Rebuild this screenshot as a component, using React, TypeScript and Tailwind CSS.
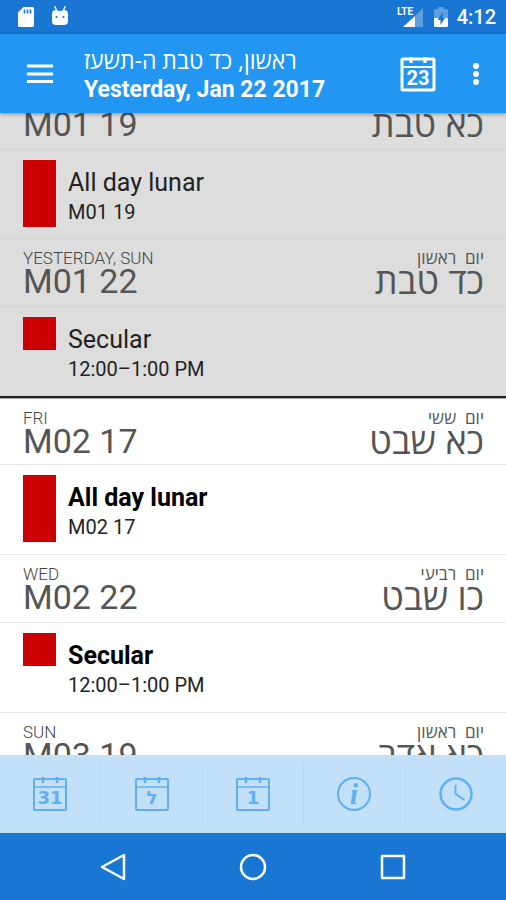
import type { ReactNode } from 'react';

type AgendaEvent = { title: string; detail: string; allDay?: boolean };

type Day = {
  weekday: string;
  date: string;
  hebrewWeekday: string;
  hebrewDate: string;
  past?: boolean;
  events: AgendaEvent[];
};

const pastDays: Day[] = [
  {
    weekday: 'THU',
    date: 'M01 19',
    hebrewWeekday: 'יום  חמישי',
    hebrewDate: 'כא טבת',
    past: true,
    events: [{ title: 'All day lunar', detail: 'M01 19', allDay: true }],
  },
  {
    weekday: 'YESTERDAY, SUN',
    date: 'M01 22',
    hebrewWeekday: 'יום  ראשון',
    hebrewDate: 'כד טבת',
    past: true,
    events: [{ title: 'Secular', detail: '12:00–1:00 PM' }],
  },
];

const upcomingDays: Day[] = [
  {
    weekday: 'FRI',
    date: 'M02 17',
    hebrewWeekday: 'יום  ששי',
    hebrewDate: 'כא שבט',
    events: [{ title: 'All day lunar', detail: 'M02 17', allDay: true }],
  },
  {
    weekday: 'WED',
    date: 'M02 22',
    hebrewWeekday: 'יום  רביעי',
    hebrewDate: 'כו שבט',
    events: [{ title: 'Secular', detail: '12:00–1:00 PM' }],
  },
  {
    weekday: 'SUN',
    date: 'M03 19',
    hebrewWeekday: 'יום  ראשון',
    hebrewDate: 'כא אדר',
    events: [],
  },
];

function CalendarIcon({ label, bold }: { label: string; bold?: boolean }) {
  return (
    <svg width="36" height="36" viewBox="0 0 36 36" fill="none" stroke="currentColor" aria-hidden="true">
      <rect x="2" y="3" width="32" height="31" rx="1" strokeWidth={bold ? 3 : 2} />
      <path d="M2 11h32" strokeWidth={bold ? 2 : 1.5} />
      <path d="M11 1v6M25 1v6" strokeWidth={bold ? 3 : 2.5} />
      <text
        x="18"
        y={bold ? 29 : 28}
        textAnchor="middle"
        fill="currentColor"
        stroke="none"
        className={bold ? 'text-[20px] font-bold font-[Roboto,sans-serif]' : "text-[18px] font-bold font-['DejaVu_Sans',sans-serif]"}
      >
        {label}
      </text>
    </svg>
  );
}

function InfoIcon() {
  return (
    <svg width="36" height="36" viewBox="0 0 36 36" fill="none" stroke="currentColor" aria-hidden="true">
      <circle cx="18" cy="18" r="16" strokeWidth="2" />
      <text
        x="18"
        y="28"
        textAnchor="middle"
        fill="currentColor"
        stroke="none"
        className="text-[30px] font-bold italic font-['Liberation_Serif',serif]"
      >
        i
      </text>
    </svg>
  );
}

function ClockIcon() {
  return (
    <svg width="36" height="36" viewBox="0 0 36 36" fill="none" stroke="currentColor" aria-hidden="true">
      <circle cx="18" cy="18" r="15.500" strokeWidth="2.500" />
      <path d="M17.500 9v9l9 6" strokeWidth="2" />
    </svg>
  );
}

function StatusBar() {
  return (
    <div className="flex h-[34px] shrink-0 items-center bg-[#1976d2] pl-[17px] pr-2.5 text-white">
      <svg width="18" height="22" viewBox="0 0 18 22" aria-hidden="true">
        <path d="M6.500 1H15.500Q17 1 17 2.500V19.500Q17 21 15.500 21H2.500Q1 21 1 19.500V6.500Z" fill="#fff" />
        <path d="M7.500 3.500v4M10.500 3.500v4M13.500 3.500v4" stroke="#1976d2" strokeWidth="1.600" />
      </svg>
      <svg width="18" height="22" viewBox="0 0 18 22" className="ml-4" aria-hidden="true">
        <path d="M3.500 0l2.500 5M14.500 0L12 5" stroke="#fff" strokeWidth="1.300" />
        <path d="M1 8Q1 4 5 4q4 2 8 0q4 0 4 4v7q0 4-4 4H5q-4 0-4-4Z" fill="#fff" />
        <circle cx="5.500" cy="11" r="1.100" fill="#1976d2" />
        <circle cx="12.500" cy="11" r="1.100" fill="#1976d2" />
      </svg>
      <svg width="28" height="22" viewBox="0 0 28 22" className="ml-auto" aria-hidden="true">
        <path d="M26 2v19H17V11Z" fill="#5e9fe0" />
        <path d="M18 10v11H6Z" fill="#fff" />
        <text x="0" y="9" fill="#fff" className="text-[10px] font-bold font-[Roboto,sans-serif]">
          LTE
        </text>
      </svg>
      <svg width="16" height="22" viewBox="0 0 16 22" className="ml-2" aria-hidden="true">
        <path d="M5 1h6v2h2.500Q15 3 15 4.500V12H1V4.500Q1 3 2.500 3H5Z" fill="#5e9fe0" />
        <path d="M1 12h14v7.500Q15 21 13.500 21h-11Q1 21 1 19.500Z" fill="#fff" />
        <path d="M10 6L4.500 14h3v5l4.500-7H9.500Z" fill="#1976d2" />
      </svg>
      <span className="ml-2 text-[20px] leading-6 font-medium">4:12</span>
    </div>
  );
}

function AppBar() {
  return (
    <header className="relative z-10 flex h-[79px] shrink-0 items-center bg-[#2196f3] pl-[26px] pr-[18px] text-white shadow-[0_1px_4px_rgba(0,0,0,0.4)]">
      <button type="button" aria-label="Open menu">
        <svg width="28" height="22" viewBox="0 0 28 22" stroke="#fff" strokeWidth="3" aria-hidden="true">
          <path d="M1 3h26M1 11h26M1 18.500h26" />
        </svg>
      </button>
      <div className="ml-[30px] flex flex-1 flex-col items-start pt-1">
        <p dir="rtl" className="text-[23px] leading-7 whitespace-nowrap font-['Open_Sans','Noto_Sans',sans-serif]">
          ראשון, כד טבת ה-תשעז
        </p>
        <h1 className="text-[23px] leading-8 font-bold whitespace-nowrap">Yesterday, Jan 22 2017</h1>
      </div>
      <button type="button" aria-label="Go to today">
        <CalendarIcon label="23" bold />
      </button>
      <button type="button" aria-label="More options" className="ml-7">
        <svg width="24" height="28" viewBox="0 0 24 28" fill="#fff" aria-hidden="true">
          <circle cx="12" cy="6" r="3" />
          <circle cx="12" cy="14" r="3" />
          <circle cx="12" cy="22" r="3" />
        </svg>
      </button>
    </header>
  );
}

function DaySection({ day, first }: { day: Day; first?: boolean }) {
  const line = day.past ? 'border-[#d2d2d2]' : 'border-[#e6e6e6]';

  return (
    <section className={day.past ? 'bg-[#dddddd]' : 'bg-white'}>
      <div className={`flex justify-between border-b pt-[11px] pl-[23px] pr-[22px] text-[#555555] ${line} ${first ? 'pb-2' : 'pb-2.5'}`}>
        <div>
          <p className="text-[17px] leading-4 font-light text-[#444444]">{day.weekday}</p>
          <h2 className="text-[34px] leading-[30px]">{day.date}</h2>
        </div>
        <div dir="rtl" className="font-['Open_Sans','Noto_Sans',sans-serif]">
          <p className="text-[17px] leading-4 whitespace-pre">{day.hebrewWeekday}</p>
          <p className="text-[36px] leading-[30px]">{day.hebrewDate}</p>
        </div>
      </div>
      {day.events.map((event) => (
        <div key={event.title} className={`flex items-start gap-3 border-b pt-2.5 pl-[23px] ${line} ${day.past ? 'pb-[11px]' : 'pb-3'}`}>
          <div className={`w-[33px] bg-[#cc0000] ${event.allDay ? 'h-[67px]' : 'h-[33px]'}`} />
          <div className="h-[67px] pt-[7px]">
            <h3 className={`text-[25px] leading-8 ${day.past ? 'text-[#222222]' : 'font-bold text-black'}`}>{event.title}</h3>
            <p className="text-[20px] leading-[26px] text-[#222222]">{event.detail}</p>
          </div>
        </div>
      ))}
    </section>
  );
}

function TabButton({ label, children }: { label: string; children: ReactNode }) {
  return (
    <button type="button" aria-label={label} className="flex flex-1 items-center justify-center">
      {children}
    </button>
  );
}

export default function App() {
  return (
    <div className="flex h-screen flex-col overflow-hidden bg-white font-[Roboto,sans-serif]">
      <StatusBar />
      <AppBar />

      {/* Agenda */}
      <main className="min-h-0 flex-1 overflow-hidden">
        <div className="-mt-[31px]">
          {pastDays.map((day) => (
            <DaySection key={day.date} day={day} />
          ))}
          <div className="h-[3px] border-b border-[#aaaaaa] bg-[#222222]" />
          {upcomingDays.map((day, i) => (
            <DaySection key={day.date} day={day} first={i === 0} />
          ))}
        </div>
      </main>

      {/* Tabs */}
      <nav className="flex h-[78px] shrink-0 items-stretch divide-x divide-[#b8d8f2] bg-[#c2e0f8] py-2 text-[#5eaff3]">
        <TabButton label="Month">
          <CalendarIcon label="31" />
        </TabButton>
        <TabButton label="Hebrew month">
          <CalendarIcon label="ל" />
        </TabButton>
        <TabButton label="Day">
          <CalendarIcon label="1" />
        </TabButton>
        <TabButton label="Info">
          <InfoIcon />
        </TabButton>
        <TabButton label="Times">
          <ClockIcon />
        </TabButton>
      </nav>

      {/* System navigation */}
      <div className="flex h-[67px] shrink-0 items-center justify-center gap-28 bg-[#1976d2]">
        <button type="button" aria-label="Back">
          <svg width="28" height="28" viewBox="0 0 28 28" fill="none" stroke="#fff" strokeWidth="2.500" strokeLinejoin="round" aria-hidden="true">
            <path d="M25 2v24L3 14Z" />
          </svg>
        </button>
        <button type="button" aria-label="Home">
          <svg width="28" height="28" viewBox="0 0 28 28" fill="none" stroke="#fff" strokeWidth="2.500" aria-hidden="true">
            <circle cx="14" cy="14" r="12" />
          </svg>
        </button>
        <button type="button" aria-label="Recent apps">
          <svg width="28" height="28" viewBox="0 0 28 28" fill="none" stroke="#fff" strokeWidth="2.500" strokeLinejoin="round" aria-hidden="true">
            <rect x="3" y="3" width="22" height="22" />
          </svg>
        </button>
      </div>
    </div>
  );
}
